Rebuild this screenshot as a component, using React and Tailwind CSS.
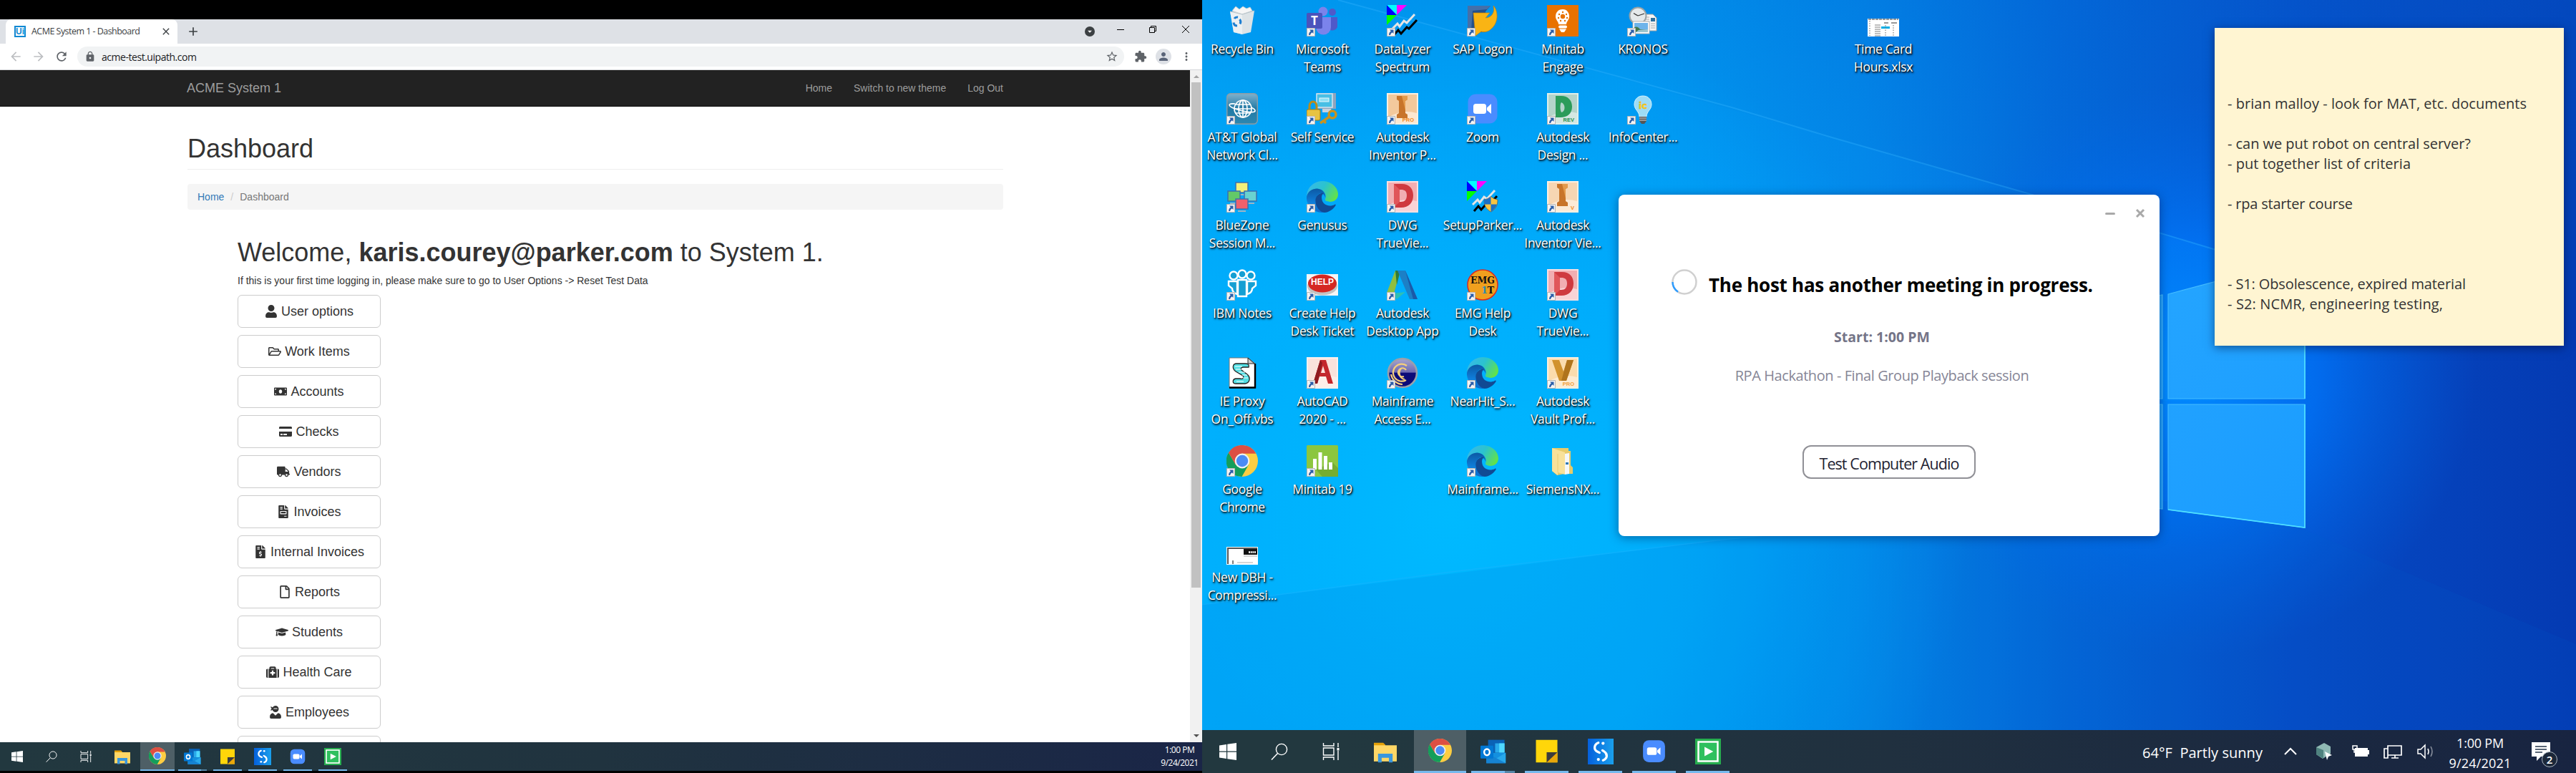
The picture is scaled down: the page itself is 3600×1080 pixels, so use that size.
import { useLayoutEffect, useRef, useState } from "react";
import {
  FaUser, FaRegFolderOpen, FaMoneyBill, FaCreditCard, FaTruck, FaFileInvoice,
  FaFileInvoiceDollar, FaRegFile, FaGraduationCap, FaMedkit, FaUserNinja,
} from "react-icons/fa";
import {
  MdArrowBack, MdArrowForward, MdRefresh, MdLock, MdStarBorder, MdExtension,
  MdPerson, MdMoreVert, MdClose, MdAdd, MdArrowDropDown,
} from "react-icons/md";

/* Text tracked so that it spans a given width. */
function Fit({ w, className = "", children }) {
  const ref = useRef(null);
  const [ls, setLs] = useState(0);
  useLayoutEffect(() => {
    const n = ref.current.getBoundingClientRect().width;
    setLs((w - n) / (String(children).length - 1));
  }, [w, children]);
  return (
    <span ref={ref} className={"inline-block whitespace-pre " + className} style={{ letterSpacing: ls + "px" }}>
      {children}
    </span>
  );
}

/* ---------- Application icons ---------- */

const Svg = ({ children, vb = "0 0 44 44", className = "h-full w-full" }) => (
  <svg viewBox={vb} className={className}>{children}</svg>
);

const ChromeIcon = () => (
  <Svg vb="2 2 44 44">
    <circle cx="24" cy="24" r="22" fill="#fdcd42" />
    <path d="M5 12.5A22 22 0 0 0 23.5 46L33 29.2 24 24 14.9 29.2Z" fill="#149e5b" />
    <path d="M5 12.5A22 22 0 0 1 43.3 13.8H24V24L14.9 29.2Z" fill="#dd4f43" />
    <circle cx="24" cy="24" r="10.4" fill="#f1f1f1" />
    <circle cx="24" cy="24" r="8.2" fill="#4b8bf5" />
  </Svg>
);

const EdgeIcon = () => (
  <Svg vb="0 0 48 48">
    <defs>
      <linearGradient id="edgeTop" x1="0" y1="0.2" x2="1" y2="0.6">
        <stop offset="0" stopColor="#38b8ea" /><stop offset="0.5" stopColor="#2bc3cf" /><stop offset="1" stopColor="#62e24a" />
      </linearGradient>
      <linearGradient id="edgeMid" x1="0" y1="0" x2="0" y2="1">
        <stop offset="0" stopColor="#0c59a4" /><stop offset="0.6" stopColor="#0f7fdc" /><stop offset="1" stopColor="#0c6acb" />
      </linearGradient>
    </defs>
    <path d="M0 24C0 9 12 0 24 0C38 0 48 10 48 20C48 28 42 31.500 36 31.500C30 31.500 27 29 28.500 27C31 22 27 12 16 11.500C8 12 2 17 0 24Z" fill="url(#edgeTop)" />
    <path d="M0 24C2 15 9 11.500 16 11.500C25 12 30 20 28.500 25C27 19 21 17 17 21C12 26 14 40 27 48C12 49 -1 38 0 24Z" fill="url(#edgeMid)" />
    <path d="M25 18C19 18.500 13.500 22.500 13.500 30C13.500 39 20 47 27 48C35 47.500 41.500 42 44.500 36.500C44.500 35.500 43.500 35 42.500 36C36 39.500 24 38 23 26C22.700 22 24 20 26 18.500Z" fill="#114a94" />
  </Svg>
);

const ZoomIcon = () => (
  <Svg>
    <rect x="1.500" y="1.500" width="41" height="41" rx="11" fill="#4a8cff" />
    <rect x="9" y="15" width="18" height="14" rx="3.500" fill="#fff" />
    <path d="M28 20.500L34 15V29L28 24Z" fill="#fff" />
  </Svg>
);

const OutlookIcon = () => (
  <Svg>
    <rect x="13" y="2" width="28" height="22" fill="#0a62b6" />
    <rect x="25" y="8" width="16" height="16" fill="#28a8ea" />
    <rect x="32" y="8" width="9" height="16" fill="#50d9ff" />
    <path d="M10 24H43V42H10Z" fill="#1490df" />
    <path d="M43 24L27 34 43 42Z" fill="#28a8ea" />
    <path d="M10 24L43 42H10Z" fill="#1683d2" />
    <rect x="0" y="12" width="22" height="22" rx="1.500" fill="#0078d4" />
    <ellipse cx="11" cy="23" rx="4.700" ry="5.300" fill="none" stroke="#fff" strokeWidth="3" />
  </Svg>
);

const StickyIcon = () => (
  <Svg vb="2 0 40 44">
    <path d="M2 1H42V43H2Z" fill="#ffd60a" />
    <path d="M22 43V24H42V43Z" fill="#e9a70a" />
    <path d="M22 43V24H42Z" fill="#3c3c3c" />
  </Svg>
);

const SIcon = () => (
  <Svg>
    <defs><linearGradient id="sg"><stop offset="0" stopColor="#0560dc" /><stop offset="1" stopColor="#1aa0ec" /></linearGradient></defs>
    <rect width="44" height="44" fill="url(#sg)" />
    <g fill="none" stroke="#fff" strokeWidth="4" strokeLinecap="round">
      <path d="M18 7C10 10 10 19 16 22L20 24" />
      <path d="M25 20L28 22C34 26 34 34 26 37" />
    </g>
    <circle cx="26" cy="8" r="2.600" fill="#fff" />
    <circle cx="18" cy="35.500" r="2.600" fill="#fff" />
  </Svg>
);

const GreenPlay = () => (
  <Svg>
    <rect width="44" height="44" fill="#27ae4f" />
    <rect x="5.500" y="5.500" width="33" height="33" fill="#2fc05e" stroke="#fff" strokeWidth="3" />
    <path d="M16 14L31 22 16 30Z" fill="#fff" />
  </Svg>
);

const ExplorerIcon = () => (
  <Svg vb="0 2 44 42">
    <path d="M0 6H18L22 10V16H0Z" fill="#e3a008" />
    <path d="M0 11H44V42H0Z" fill="#ffd766" />
    <path d="M8 27H36V44H29V35H15V44H8Z" fill="#3a97dd" />
  </Svg>
);

const WinIcon = () => (
  <Svg vb="0 0 24 24">
    <path d="M0 3.400L10 2V11.500H0ZM11.200 1.800L24 0V11.500H11.200ZM0 12.700H10V22L0 20.600ZM11.200 12.700H24V24L11.200 22.200Z" fill="#fff" />
  </Svg>
);

const SearchIcon = () => (
  <Svg vb="0 0 24 24">
    <circle cx="15" cy="9" r="7.600" fill="none" stroke="#fff" strokeWidth="1.400" />
    <path d="M9.600 14.500L1 23.500" stroke="#fff" strokeWidth="1.500" />
  </Svg>
);

const TaskViewIcon = () => (
  <Svg vb="0 0 24 24">
    <g fill="none" stroke="#fff" strokeWidth="1.400">
      <path d="M1.500 0V4H16V0M1.500 24V20H16V24M1.500 7H16V17H1.500ZM22 0V6M22 11V24" />
    </g>
    <rect x="20.500" y="7" width="3" height="3.500" fill="#fff" />
  </Svg>
);

const RecycleIcon = () => (
  <Svg>
    <path d="M5 9L39 8 34 38 22 41 10 38Z" fill="#dde3e6" />
    <path d="M5 9L22 12V41L10 38Z" fill="#f2f5f6" opacity="0.7" />
    <path d="M8 8L13 2 18 6 23 2 28 5 33 3 36 8 22 13Z" fill="#f6f6f6" stroke="#c4cace" strokeWidth="0.8" />
    <path d="M5 9L22 13 39 8" fill="none" stroke="#b7c4ca" />
    <g fill="none" stroke="#1f7fd0" strokeWidth="3">
      <path d="M11 19Q12.500 16.500 16 17" /><path d="M18.500 20Q21 23 19 26.500" /><path d="M15 29Q10.500 29 10 24.500" />
    </g>
  </Svg>
);

const TeamsIcon = () => (
  <Svg>
    <circle cx="36" cy="10" r="5" fill="#5059c9" />
    <path d="M31 17H43V31A8 8 0 0 1 31 34Z" fill="#5059c9" />
    <circle cx="23" cy="9" r="6.500" fill="#7b83eb" />
    <path d="M13 17H34V31A10.500 10.500 0 0 1 13 31Z" fill="#7b83eb" />
    <rect x="0" y="11" width="22" height="22" rx="2" fill="#4b53bc" />
    <text x="11" y="28" textAnchor="middle" fontSize="17" fontWeight="700" fill="#fff" fontFamily="Open Sans, sans-serif">T</text>
  </Svg>
);

const Shield = () => (
  <g>
    <path d="M24 26Q30 25 33.500 21.500 37 25 43 26C43 35 40 39 33.500 43 27 39 24 35 24 26Z" fill="#f9c440" stroke="#555" strokeWidth="0.700" />
    <path d="M33.500 22V32.500H24.500Q24 29 24 26 30 25 33.500 22ZM33.500 32.500H42Q40 39 33.500 43Z" fill="#1c6fc4" />
  </g>
);

const DataIcon = ({ shield }) => (
  <Svg>
    <path d="M0 0H14V14Z" fill="#00ffff" /><path d="M0 0V14H14Z" fill="#0000ff" />
    <path d="M14 0H28L14 14Z" fill="#ff00ff" /><path d="M0 14H14L0 28Z" fill="#00ff00" />
    <path d="M8 33L15 26 18 30 24 22 28 25 39 13" fill="none" stroke="#e5e5e5" strokeWidth="3" />
    <path d="M10 42L16 35 20 40 28 31 31 33 42 21" fill="none" stroke="#000" strokeWidth="3" />
    {shield && <Shield />}
  </Svg>
);

const SapIcon = () => (
  <Svg>
    <path d="M1 1H33L26 9V38H1Z" fill="#23508c" />
    <path d="M1 1H33L28 6 8 8 6 36 1 38Z" fill="#5a86bd" opacity="0.6" />
    <path d="M9 11H32L26 18C34 18 40 10 37 1 44 8 45 26 32 35 28 38 22 38 20 37L12 43Z" fill="#f9b414" stroke="#c98408" strokeWidth="0.700" />
  </Svg>
);

const MinitabEngage = () => (
  <Svg>
    <rect width="44" height="44" fill="#e87200" />
    <path d="M22 6C15 6 12 11 12 16 12 21 16 23 16 27H27C27 23 31 21 31 16 31 11 28 6 22 6Z" fill="#fff" />
    <rect x="16" y="28.500" width="12" height="4" rx="2" fill="#fff" /><path d="M17 33.500H27L24 38H20Z" fill="#fff" />
    <circle cx="22" cy="16" r="3.200" fill="#e87200" />
    <g fill="#e87200"><circle cx="22" cy="10" r="1.200" /><circle cx="17" cy="13" r="1.200" /><circle cx="27" cy="13" r="1.200" /><circle cx="16" cy="18" r="1.200" /><circle cx="28" cy="18" r="1.200" /><circle cx="19" cy="22" r="1.200" /><circle cx="25" cy="22" r="1.200" /></g>
  </Svg>
);

const KronosIcon = () => (
  <Svg>
    <path d="M22 13H36L41 18V36H22Z" fill="#f5f5f5" stroke="#a5a5a5" />
    <rect x="33" y="18" width="6" height="5" fill="#2d6f9e" />
    <path d="M25 17H31M25 20H31M25 23H31M33 26H39M33 29H39M33 32H39" stroke="#aaa" />
    <circle cx="15" cy="15" r="11.500" fill="#e5e9ea" stroke="#9aa3a5" strokeWidth="2" />
    <path d="M15 15L9 11.500M15 15L24 12" stroke="#333" strokeWidth="1.300" />
    <rect x="8" y="23" width="23" height="17" fill="#fff" stroke="#b4b4b4" />
    <rect x="10" y="25" width="19" height="13" fill="#6eb4ea" />
    <path d="M10 31Q15 29 18 34L29 35V38H10Z" fill="#44784c" /><path d="M16 35L29 34V38H12Z" fill="#9cc5d0" />
  </Svg>
);

const AttIcon = () => (
  <Svg>
    <defs><linearGradient id="att" x1="0" y1="0" x2="0" y2="1"><stop offset="0" stopColor="#7fb1cd" /><stop offset="0.500" stopColor="#227aa5" /><stop offset="1" stopColor="#2d87b0" /></linearGradient></defs>
    <rect x="0.700" y="0.700" width="42.600" height="42.600" rx="5" fill="url(#att)" stroke="#8d9da6" strokeWidth="1.400" />
    <g fill="none" stroke="#fff" strokeWidth="1.700">
      <circle cx="23" cy="22" r="12" /><ellipse cx="23" cy="22" rx="6" ry="12" /><path d="M23 10V34M12.500 16H33.500M12.500 28H33.500M11 22H35" />
      <path d="M12 15C2 14 1 18 12 22 26 27 40 28 40 25 40 23 37 21 34 20" />
    </g>
  </Svg>
);

const SelfIcon = () => (
  <Svg>
    <path d="M14 0H41V22H14Z" fill="#8fa4bd" /><rect x="14" y="1" width="22" height="19" fill="#48bfe5" stroke="#d3e3ee" strokeWidth="1.500" />
    <rect x="18" y="7" width="13" height="5" fill="#8fe0f5" stroke="#eaf7fb" /><path d="M22 22H34L36 27H22Z" fill="#c9d2dc" />
    <path d="M4 25V18A5 6 0 0 1 14 18V25" fill="none" stroke="#b98d1b" strokeWidth="3" />
    <rect x="0" y="23" width="19" height="15" rx="2" fill="#e7c341" stroke="#a67d12" />
    <circle cx="36" cy="30" r="5" fill="none" stroke="#c9931f" strokeWidth="3.500" /><path d="M32 33L19 42M24 39L27 42" stroke="#c9931f" strokeWidth="3.500" />
  </Svg>
);

const Tile = ({ bg, bg2, tag, tagColor, shape }) => (
  <Svg>
    <rect width="44" height="44" fill={bg} />
    <rect x="2" y="2" width="40" height="40" fill={bg2} />
    <path d="M2 34Q22 22 42 28V42H2Z" fill={bg} opacity="0.75" />
    {shape}
    {tag && <text x="38" y="40" textAnchor="end" fontSize="7.500" fontWeight="700" fill={tagColor} fontFamily="Liberation Sans, sans-serif">{tag}</text>}
  </Svg>
);

const iShape = (
  <g><path d="M14 4H29V9L26 11V28L29 30V35H14V30L17 28V11L14 9Z" fill="#c8742a" /><path d="M21 4H29V9L26 11V24Z" fill="#e39a4c" /></g>
);
const dShape = (
  <g>
    <path fillRule="evenodd" d="M10 4H21C32 4 37 11 37 20 37 30 31 37 20 37H10ZM18 12V29H20C25 29 28 26 28 20 28 14 25 12 20 12Z" fill="#cf3a40" />
    <path d="M10 4L18 12V29L10 37Z" fill="#e0565a" />
  </g>
);
const InventorPro = () => <Tile bg="#fdf0e2" bg2="#f3c99c" shape={iShape} tag="PRO" tagColor="#ee8822" />;
const InventorView = () => <Tile bg="#fdf0e2" bg2="#f6d6b3" shape={iShape} tag="V" tagColor="#ee8822" />;
const Dwg = () => <Tile bg="#fbdfe1" bg2="#f1aeb2" shape={dShape} />;
const DesignRev = () => (
  <Tile bg="#dfeee9" bg2="#b4d4ca" tag="REV" tagColor="#1f8f4c" shape={<path fillRule="evenodd" d="M12 4H20C29 4 35 10 35 19 35 29 28 34 19 34H12ZM20 13C18 15 18 24 20 27 26 26 26 15 20 13Z" fill="#2c9c5a" />} />
);
const AutoCad = () => (
  <Tile bg="#fdf1ee" bg2="#fae2dc" shape={<g><path fillRule="evenodd" d="M9 37L19 4H27L37 37H30L27 27H18L15 37ZM20 22H26L23 12Z" fill="#c4262c" /><path d="M9 37L19 4 22 8 15 37Z" fill="#8f1a20" /></g>} />
);
const Vault = () => (
  <Tile bg="#fdf0de" bg2="#fbdcae" tag="PRO" tagColor="#f0a040" shape={<g><path d="M7 4H17L23 20 28 4H37L27 33H17Z" fill="#d1922e" /><path d="M28 4H37L27 33H20Z" fill="#b0741c" /></g>} />
);

const Monitor = ({ x, y, c }) => (
  <g><rect x={x} y={y} width="17" height="14" fill={c} stroke="#3c6fae" strokeWidth="1.500" /><path d={`M${x + 3} ${y + 17}H${x + 14}`} stroke="#9fb3c4" strokeWidth="2" /></g>
);
const BlueZone = () => (
  <Svg><Monitor x={13} y={2} c="#f4f07a" /><Monitor x={2} y={14} c="#63c968" /><Monitor x={25} y={14} c="#69d2d0" /><Monitor x={13} y={25} c="#f0606c" /></Svg>
);

const IbmNotes = () => (
  <Svg>
    <g fill="#159fd3" stroke="#fff" strokeWidth="2.400">
      <circle cx="10" cy="9" r="5.500" /><circle cx="34" cy="9" r="5.500" />
      <path d="M3 17H15V35Q8 33 8 27L3 23ZM41 17H29V35Q36 33 36 27L41 23Z" />
      <circle cx="22" cy="7" r="5.500" /><path d="M16 15H28V38H16Z" />
    </g>
  </Svg>
);

const HelpIcon = () => (
  <Svg>
    <rect y="7" width="44" height="30" fill="#f5f5f5" />
    <ellipse cx="22" cy="24" rx="21" ry="12.500" fill="#c3c3c3" /><ellipse cx="22" cy="20" rx="20" ry="12.500" fill="#d52823" />
    <text x="22" y="22" textAnchor="middle" fontSize="12" fontWeight="700" fill="#fff" fontFamily="Liberation Sans, sans-serif">HELP</text>
  </Svg>
);

const DesktopApp = () => (
  <Svg>
    <path d="M0 33L12 2H19L10 34 0 42Z" fill="#8fbf3f" /><path d="M12 2L19 2 14 22Z" fill="#2e7b3c" />
    <path d="M15 2H26L43 42H32Z" fill="#1c80c6" /><path d="M26 2L43 42H37Z" fill="#1b59a8" /><path d="M8 34L26 32 14 42Z" fill="#2ebfb5" />
  </Svg>
);

const EmgIcon = () => (
  <Svg>
    <circle cx="22" cy="22" r="21" fill="#f0a01e" stroke="#dd2a1e" strokeWidth="1.500" />
    <text x="22" y="20" textAnchor="middle" fontSize="12.500" fontWeight="700" fill="#111" fontFamily="DejaVu Serif, serif">EMG</text>
    <text x="20" y="34" fontSize="13" fontWeight="700" fill="#2b8cb0" fontFamily="DejaVu Serif, serif">1</text>
    <text x="28.500" y="34" fontSize="13" fontWeight="700" fill="#111" fontFamily="DejaVu Serif, serif">T</text>
  </Svg>
);

const ScriptIcon = () => (
  <Svg>
    <path d="M4 1H30L40 9V43H4Z" fill="#fff" stroke="#777" />
    <path d="M4 42.500H40V9" fill="none" stroke="#000" strokeWidth="2.400" /><path d="M30 1V9H39Z" fill="#ccc" stroke="#222" />
    <path d="M31 14C32 10 30 9 26 9H13C8 10 8 16 13 20L23 26C25 29 23 31 19 30H13C8 31 8 37 13 37H26C33 36 34 28 29 24L21 18C19 16 21 14 24 14Z" fill="#52dfe4" stroke="#222" strokeWidth="1.300" />
    <path d="M12 13H22M13 17H21M17 21H26M22 25H29M23 29H30M14 34H24" stroke="#fff" strokeWidth="1.200" />
  </Svg>
);

const MainframeIcon = () => (
  <Svg>
    <defs><linearGradient id="mf" x1="0" y1="0" x2="0" y2="1"><stop offset="0" stopColor="#a9a6cf" /><stop offset="0.480" stopColor="#6d69b0" /><stop offset="0.500" stopColor="#0c0b78" /><stop offset="1" stopColor="#0c0b78" /></linearGradient></defs>
    <circle cx="22" cy="22" r="20" fill="url(#mf)" stroke="#9aa0aa" strokeWidth="2.600" />
    <g fill="none" stroke="#f5cf7c" strokeWidth="2.200">
      <path d="M27 18A6 6 0 1 0 24 27M28 12A12 12 0 1 0 27 32" /><path d="M6 24A17 17 0 0 0 22 38" /><path d="M20 16A9 9 0 0 0 25 31" />
    </g>
  </Svg>
);

const Minitab19 = () => (
  <Svg>
    <rect width="44" height="44" rx="1.500" fill="#8cc63f" />
    <path d="M13 34L36 24 44 32V44H22Z" fill="#76ad31" />
    <g fill="#fff"><rect x="9" y="19" width="5" height="15" /><rect x="16.500" y="10" width="5" height="24" /><rect x="24" y="15" width="5" height="19" /><rect x="31" y="24" width="5" height="10" /></g>
  </Svg>
);

const BulbIcon = () => (
  <Svg>
    <path d="M22 4C13 4 10 11 10 16 10 23 17 26 17 33H27C27 26 34 23 34 16 34 11 31 4 22 4Z" fill="#9edcf5" stroke="#d8f3fd" />
    <text x="22" y="22" textAnchor="middle" fontSize="13" fontWeight="700" fill="#f9d423" stroke="#e8a512" strokeWidth="0.400" fontFamily="DejaVu Sans, sans-serif">ic</text>
    <path d="M17 33H27V39L24 43H20L17 39Z" fill="#555" /><path d="M17 35H27M17 38H27" stroke="#ddd" />
  </Svg>
);

const FolderDocs = () => (
  <Svg>
    <path d="M7 4H30V8H33V28L36 31V40H24L14 42 7 36Z" fill="#e8cb6a" />
    <path d="M25 12L31 11V40L25 41Z" fill="#f5f7f8" /><path d="M26 24H30V27H26Z" fill="#2f78b5" />
    <path d="M7 4L25 10V41L15 38V42L7 36Z" fill="#f8e19a" /><path d="M15 12V38" stroke="#e9cc77" />
  </Svg>
);

const DbhThumb = () => (
  <Svg>
    <rect y="19" width="44" height="25" fill="#fff" />
    <path d="M1 20H43V22H3V43H1Z" fill="#555" /><rect x="24" y="22" width="19" height="8" fill="#111" />
    <path d="M31 26.500H41" stroke="#fff" strokeWidth="2.500" strokeDasharray="2 0.700" /><path d="M24 32H43M15 41H37" stroke="#999" strokeWidth="0.800" /><path d="M9 38V43" stroke="#000" />
  </Svg>
);

const XlsThumb = () => (
  <Svg>
    <rect y="19" width="44" height="25" fill="#fff" /><path d="M1 20H43" stroke="#333" strokeDasharray="4 1" />
    <rect x="19" y="30" width="12" height="3" fill="#00aee6" />
    <path d="M10 28H18M10 31H18M10 34H18M10 37H18M10 40H18M10 43H18" stroke="#aaa" strokeWidth="1.300" />
    <path d="M23 25H29M33 25H41" stroke="#777" strokeWidth="1.500" />
    <path d="M3 22V43M25 28V43M36 28V43" stroke="#888" strokeDasharray="1.500 1.800" strokeWidth="1.300" />
  </Svg>
);

/* ---------- Taskbar ---------- */

const apps = [
  { Icon: OutlookIcon, split: true },
  { Icon: StickyIcon, narrow: true },
  { Icon: SIcon },
  { Icon: ZoomIcon, narrow: true },
  { Icon: GreenPlay },
];

function SmallTaskbar() {
  return (
    <div className="flex h-10 shrink-0 bg-linear-to-r from-[#22383f] via-[#20333f] to-[#1a2547] text-white">
      {[WinIcon, SearchIcon, TaskViewIcon].map((Icon, i) => (
        <div key={i} className="flex w-12 items-center justify-center"><div className="h-4 w-4"><Icon /></div></div>
      ))}
      <div className="flex w-[52px] items-center justify-center pl-0.5"><div className="h-[22px] w-[22px]"><ExplorerIcon /></div></div>
      <div className="flex w-12 items-center justify-center border-b-2 border-[#76b9ed] bg-[#4e5f66]">
        <div className="h-6 w-6"><ChromeIcon /></div>
      </div>
      {apps.map(({ Icon, narrow, split }, i) => (
        <div key={i} className="flex w-[49px] flex-col items-center">
          <div className="flex flex-1 items-center pt-0.5"><div className={narrow ? "h-[22px] w-[22px]" : "h-6 w-6"}><Icon /></div></div>
          <div className="flex h-0.5 w-10 bg-[#76b9ed]">{split && <div className="ml-auto w-2 bg-[#5585a6]" />}</div>
        </div>
      ))}
      <div className="ml-auto flex w-[63px] flex-col justify-center text-center font-['Open_Sans',sans-serif] text-[12px] leading-[18px] tracking-[-0.5px]">
        <div>1:00 PM</div><div>9/24/2021</div>
      </div>
    </div>
  );
}

function LargeTaskbar() {
  return (
    <div className="relative flex h-[60px] shrink-0 bg-linear-to-r from-[#22383f] from-10% via-[#20303f] via-50% to-[#182441] text-white">
      {[WinIcon, SearchIcon, TaskViewIcon].map((Icon, i) => (
        <div key={i} className="flex w-[72px] items-center justify-center"><div className="h-6 w-6"><Icon /></div></div>
      ))}
      <div className="flex w-20 items-center justify-center"><div className="h-8 w-8"><ExplorerIcon /></div></div>
      <div className="flex w-[73px] items-center justify-center border-b-3 border-[#76b9ed] bg-[#4e5f66]">
        <div className="h-[33px] w-[33px]"><ChromeIcon /></div>
      </div>
      {apps.map(({ Icon, narrow, split }, i) => (
        <div key={i} className="flex w-[75px] flex-col items-center">
          <div className="flex flex-1 items-center pt-0.5"><div className={narrow ? "h-[33px] w-[33px]" : "h-9 w-9"}><Icon /></div></div>
          <div className="flex h-[3px] w-[61px] bg-[#76b9ed]">{split && <div className="ml-auto w-3.5 bg-[#5585a6]" />}</div>
        </div>
      ))}
      <div className="ml-auto flex items-center font-['Open_Sans',sans-serif]">
        <Fit w={168} className="mr-[25px] pt-1 text-[20px]">64°F  Partly sunny</Fit>
        <svg viewBox="0 0 28 28" className="mr-[19px] h-7 w-7 fill-none stroke-white stroke-2"><path d="M6 18L14 10 22 18" /></svg>
        <svg viewBox="0 0 28 28" className="mr-[23px] h-7 w-7">
          <path d="M3 8L14 2 23 7V17L12 24 3 18Z" fill="#8fb9b4" /><path d="M3 8L13 12V24L3 18Z" fill="#4f827f" />
          <path d="M15 14L25 19 20 21 18 26Z" fill="#fff" />
        </svg>
        <svg viewBox="0 0 28 28" className="mr-[17px] h-7 w-7">
          <path d="M6 9H24V21H6Z" fill="#fff" /><path d="M24 12H26V18H24Z" fill="#fff" /><path d="M3 6H9V11H3ZM5 11V15H9" fill="none" stroke="#fff" strokeWidth="1.500" />
        </svg>
        <svg viewBox="0 0 28 28" className="mr-[18px] h-7 w-7 fill-none stroke-white [stroke-width:1.700]"><path d="M7 6H26V19H7ZM12 23H22M17 19V23M2 10H7V23H2Z" /></svg>
        <svg viewBox="0 0 28 28" className="mr-[16px] h-7 w-7 fill-none stroke-white [stroke-width:1.500]"><path d="M3 11H7L13 5V23L7 17H3Z" /><path d="M17 10Q19 14 17 18" /><path d="M21 7Q25 14 21 21" opacity="0.5" /></svg>
        <div className="flex w-[92px] flex-col items-center pt-1 text-[18px] leading-[28px]">
          <Fit w={66}>1:00 PM</Fit><Fit w={87}>9/24/2021</Fit>
        </div>
        <div className="relative ml-[24px] mr-[28px] h-8 w-9">
          <svg viewBox="0 0 36 32" className="h-8 w-9"><path d="M2 3H28V23H15L9 29V23H2Z" fill="#fff" /><path d="M7 9H23M7 13H23M7 17H17" stroke="#24344a" strokeWidth="1.500" /></svg>
          <span className="absolute -right-0.5 -bottom-1.5 flex h-[22px] w-[22px] items-center justify-center rounded-full border border-[#aab4bf] bg-[#1b2739] text-[15px] font-semibold">2</span>
        </div>
      </div>
    </div>
  );
}

/* ---------- Browser ---------- */

const menu = [
  [FaUser, "User options"], [FaRegFolderOpen, "Work Items"], [FaMoneyBill, "Accounts"],
  [FaCreditCard, "Checks"], [FaTruck, "Vendors"], [FaFileInvoice, "Invoices"],
  [FaFileInvoiceDollar, "Internal Invoices"], [FaRegFile, "Reports"], [FaGraduationCap, "Students"],
  [FaMedkit, "Health Care"], [FaUserNinja, "Employees"], [null, ""],
];

function Browser() {
  return (
    <section className="flex h-full w-[1680px] shrink-0 flex-col overflow-hidden bg-black pt-[27px] pb-[3px]">
      <div className="flex h-[34px] shrink-0 bg-[#dee1e6] pl-2 font-['Open_Sans',sans-serif]">
        <div className="flex w-60 items-center rounded-t-lg bg-white pl-3 text-[#3c4043]">
          <div className="flex h-4 w-4 items-center justify-center border-2 border-[#1089d3] font-['Liberation_Sans',sans-serif] text-[12px] font-bold leading-none text-[#1089d3]">Ui</div>
          <Fit w={152} className="ml-2 text-[12.500px]">ACME System 1 - Dashboard</Fit>
          <MdClose className="mr-2 ml-auto h-4 w-4" />
        </div>
        <MdAdd className="mt-[7px] ml-3 h-5 w-5 text-[#3c4043]" />
        <div className="ml-auto flex h-7 items-center">
          <div className="mr-[31px] flex h-3.5 w-3.5 translate-y-[3px] items-center justify-center rounded-full bg-[#3c4043] text-white"><MdArrowDropDown className="h-4 w-4" /></div>
          <div className="mr-[35px] h-px w-2.5 bg-black" />
          <svg viewBox="0 0 10 10" className="mr-[36px] h-2.5 w-2.5 fill-none stroke-black"><path d="M.5 2.500H7.500V9.500H.5ZM2.500 2.500V.5H9.500V7.500H7.500" /></svg>
          <svg viewBox="0 0 10 10" className="mr-[18px] h-2.5 w-2.5 stroke-black"><path d="M0 0L10 10M10 0L0 10" /></svg>
        </div>
      </div>
      <div className="flex h-[37px] shrink-0 items-center border-b border-[#d5d7da] bg-white text-[#5f6368]">
        <MdArrowBack className="ml-3 h-5 w-5 text-[#bdbfc2]" />
        <MdArrowForward className="ml-3 h-5 w-5 text-[#bdbfc2]" />
        <MdRefresh className="ml-3 h-5 w-5" />
        <div className="ml-3 flex h-7 w-[1463px] items-center rounded-full bg-[#f1f3f4] pl-2.5">
          <MdLock className="h-4 w-4" />
          <Fit w={133} className="ml-2 font-['Open_Sans',sans-serif] text-[14px] text-[#202124]">acme-test.uipath.com</Fit>
          <MdStarBorder className="mr-2 ml-auto h-[18px] w-[18px]" />
        </div>
        <MdExtension className="ml-3.5 h-[18px] w-[18px]" />
        <div className="ml-3 flex h-[22px] w-[22px] items-center justify-center rounded-full bg-[#dee1e6]"><MdPerson className="h-[18px] w-[18px] text-[#5a6478]" /></div>
        <MdMoreVert className="ml-3 h-[18px] w-[18px]" />
      </div>
      <div className="flex min-h-0 flex-1 bg-white font-['Liberation_Sans',sans-serif] text-[14px] leading-5 text-[#333]">
        <main className="w-[1663px] overflow-hidden">
          <nav className="flex h-[51px] items-center border-b border-[#080808] bg-[#222] pr-[261px] pl-[261px] text-[#9d9d9d]">
            <div className="text-lg">ACME System 1</div>
            <div className="ml-auto flex gap-[30px]"><span>Home</span><span>Switch to new theme</span><span>Log Out</span></div>
          </nav>
          <div className="ml-[262px] w-[1140px]">
            <h1 className="border-b border-[#eee] pt-[39px] pb-2 text-[36px] leading-[40px]">Dashboard</h1>
            <div className="mt-5 flex h-9 items-center rounded bg-[#f5f5f5] px-3.5">
              <span className="text-[#337ab7]">Home</span><span className="mx-[9px] text-[#ccc]">/</span><span className="text-[#777]">Dashboard</span>
            </div>
            <div className="pt-[40px] pl-[70px]">
              <h2 className="text-[36px] leading-[40px]">Welcome, <b>karis.courey@parker.com</b> to System 1.</h2>
              <p className="mt-[9px] mb-[10px]">If this is your first time logging in, please make sure to go to User Options -&gt; Reset Test Data</p>
              <div className="flex flex-col gap-2.5">
                {menu.map(([Icon, label], i) => (
                  <div key={i} className="flex h-[46px] w-[200px] items-center justify-center gap-[5px] rounded-md border border-[#ccc] text-lg">
                    {Icon && <Icon className="h-[18px] w-auto" />}<span>{label}</span>
                  </div>
                ))}
              </div>
            </div>
          </div>
        </main>
        <div className="flex w-[17px] flex-col items-center bg-[#f1f1f1]">
          <div className="mt-[7px] h-0 w-0 border-x-4 border-b-4 border-x-transparent border-b-[#a3a3a3]" />
          <div className="mt-1.5 h-[706px] w-[13px] bg-[#c1c1c1]" />
          <div className="mt-auto mb-[7px] h-0 w-0 border-x-4 border-t-4 border-x-transparent border-t-[#505050]" />
        </div>
      </div>
      <SmallTaskbar />
    </section>
  );
}

/* ---------- Desktop ---------- */

const items = [
  [0, 0, RecycleIcon, ["Recycle Bin"], false], [1, 0, TeamsIcon, ["Microsoft", "Teams"]], [2, 0, DataIcon, ["DataLyzer", "Spectrum"]],
  [3, 0, SapIcon, ["SAP Logon"]], [4, 0, MinitabEngage, ["Minitab", "Engage"]], [5, 0, KronosIcon, ["KRONOS"]],
  [8, 0, XlsThumb, ["Time Card", "Hours.xlsx"], false],
  [0, 1, AttIcon, ["AT&T Global", "Network Cl..."]], [1, 1, SelfIcon, ["Self Service"]], [2, 1, InventorPro, ["Autodesk", "Inventor P..."]],
  [3, 1, ZoomIcon, ["Zoom"]], [4, 1, DesignRev, ["Autodesk", "Design ..."]], [5, 1, BulbIcon, ["InfoCenter..."]],
  [0, 2, BlueZone, ["BlueZone", "Session M..."]], [1, 2, EdgeIcon, ["Genusus"]], [2, 2, Dwg, ["DWG", "TrueVie..."]],
  [3, 2, () => <DataIcon shield />, ["SetupParker..."], false], [4, 2, InventorView, ["Autodesk", "Inventor Vie..."]],
  [0, 3, IbmNotes, ["IBM Notes"]], [1, 3, HelpIcon, ["Create Help", "Desk Ticket"]], [2, 3, DesktopApp, ["Autodesk", "Desktop App"]],
  [3, 3, EmgIcon, ["EMG Help", "Desk"]], [4, 3, Dwg, ["DWG", "TrueVie..."]],
  [0, 4, ScriptIcon, ["IE Proxy", "On_Off.vbs"], false], [1, 4, AutoCad, ["AutoCAD", "2020 - ..."]], [2, 4, MainframeIcon, ["Mainframe", "Access E..."]],
  [3, 4, EdgeIcon, ["NearHit_S..."]], [4, 4, Vault, ["Autodesk", "Vault Prof..."]],
  [0, 5, ChromeIcon, ["Google", "Chrome"]], [1, 5, Minitab19, ["Minitab 19"]], [3, 5, EdgeIcon, ["Mainframe..."]],
  [4, 5, FolderDocs, ["SiemensNX..."], false],
  [0, 6, DbhThumb, ["New DBH -", "Compressi..."], false],
];

function DesktopItem({ col, row, Icon, lines, shortcut }) {
  return (
    <div className="flex flex-col items-center pt-[7px]" style={{ gridColumn: col + 1, gridRow: row + 1 }}>
      <div className="relative h-11 w-11 shrink-0">
        <Icon />
        {shortcut && (
          <svg viewBox="0 0 12 12" className="absolute bottom-0 left-0 h-3 w-3">
            <path d="M.5.5H11.500V11.500H.5Z" fill="#f4f4f4" stroke="#b5b5b5" />
            <path d="M4 2.500H9.500V8L7.800 6.300Q5.500 7.500 5 10H3Q3 6.500 5.800 4.300Z" fill="#2c5ea8" />
          </svg>
        )}
      </div>
      <div className="mt-[5px] text-center text-[17.500px] leading-[25px] tracking-[-0.300px] whitespace-nowrap text-white [text-shadow:1px_1px_2px_rgba(0,0,0,1),1px_2px_3px_rgba(0,0,0,0.8)]">
        {lines.map((l) => <div key={l}>{l}</div>)}
      </div>
    </div>
  );
}

const Wallpaper = () => (
  <svg viewBox="0 0 1920 1020" className="absolute inset-0 h-[1020px] w-[1920px]">
    <defs>
      <linearGradient id="base" x1="0" y1="0" x2="1" y2="0">
        <stop offset="0" stopColor="#00aaf8" /><stop offset="0.300" stopColor="#00a2f4" /><stop offset="0.480" stopColor="#0388e8" />
        <stop offset="0.620" stopColor="#0468d8" /><stop offset="0.800" stopColor="#064ac4" /><stop offset="1" stopColor="#043ab2" />
      </linearGradient>
      <linearGradient id="topShade" x1="0" y1="0" x2="0" y2="1">
        <stop offset="0" stopColor="#0068d8" stopOpacity="0.300" /><stop offset="0.450" stopColor="#0080e8" stopOpacity="0" />
      </linearGradient>
      <radialGradient id="cyan" cx="350" cy="720" r="720" gradientUnits="userSpaceOnUse">
        <stop offset="0" stopColor="#00baff" /><stop offset="0.500" stopColor="#00b2ff" stopOpacity="0.700" /><stop offset="1" stopColor="#00a8ff" stopOpacity="0" />
      </radialGradient>
      <radialGradient id="glow" cx="1380" cy="520" r="400" gradientUnits="userSpaceOnUse">
        <stop offset="0" stopColor="#008cff" /><stop offset="0.450" stopColor="#007aff" stopOpacity="0.700" /><stop offset="1" stopColor="#0068e8" stopOpacity="0" />
      </radialGradient>
      <linearGradient id="pane" x1="0" y1="0" x2="1" y2="1"><stop offset="0" stopColor="#28a8ff" /><stop offset="1" stopColor="#1a9cff" /></linearGradient>
      <linearGradient id="beam" x1="0" y1="0" x2="1" y2="0"><stop offset="0" stopColor="#00b4ff" stopOpacity="0.150" /><stop offset="1" stopColor="#0090ff" stopOpacity="0.550" /></linearGradient>
    </defs>
    <rect width="1920" height="1020" fill="url(#base)" />
    <rect width="1920" height="1020" fill="url(#topShade)" />
    <rect width="1920" height="1020" fill="url(#cyan)" />
    <rect width="1920" height="1020" fill="url(#glow)" />
    <path d="M190 0L880 192 1416 348V560L0 560V0Z" fill="url(#beam)" opacity="0.350" />
    <path d="M0 845L720 755 1344 700 1541 740 1920 900V1020H0Z" fill="#0062d0" opacity="0.120" />
    <g fill="none" stroke="#35b4ff">
      <path d="M190 0L740 150 880 192 1160 272 1420 350" strokeWidth="2" opacity="0.350" />
      <path d="M0 845L340 800 720 755 1340 690" strokeWidth="1.500" opacity="0.250" />
    </g>
    <g fill="url(#pane)" stroke="#45bdff" strokeWidth="1.200">
      <path d="M1160 440L1342 412V557H1160ZM1160 565H1342V711L1160 690ZM1350 411L1541 360V557H1350ZM1350 565H1541V737L1350 712Z" />
    </g>
    <path d="M1541 360V557M1541 565V737L1350 712" fill="none" stroke="#4fe0ff" strokeWidth="1.600" />
  </svg>
);

const note = [
  "- brian malloy - look for MAT, etc. documents", "", "- can we put robot on central server?", "- put together list of criteria", "",
  "- rpa starter course", "", "", "", "- S1: Obsolescence, expired material", "- S2: NCMR, engineering testing,",
];
const noteWidths = [418, 0, 340, 256, 0, 175, 0, 0, 0, 333, 301];

function Desktop() {
  return (
    <section className="relative flex h-full w-[1920px] flex-col overflow-hidden bg-[#0472dd] font-['Open_Sans',sans-serif]">
      <Wallpaper />
      <div className="relative min-h-0 flex-1">
        <div className="grid grid-cols-[repeat(9,112px)] grid-rows-[repeat(7,123px)]">
          {items.map(([c, r, Icon, lines, s = true]) => (
            <DesktopItem key={c + "-" + r} col={c} row={r} Icon={Icon} lines={lines} shortcut={s} />
          ))}
        </div>

        <div className="absolute top-[272px] left-[582px] flex h-[477px] w-[756px] flex-col items-center rounded-lg bg-white shadow-[0_2px_14px_rgba(0,30,80,0.5)]">
          <div className="flex h-[52px] w-full items-center justify-end pr-[20px] text-[#a6a6a6]">
            <div className="mr-[28px] h-[3px] w-3.5 rounded bg-[#a9a9a9]" />
            <svg viewBox="0 0 14 14" className="h-3.5 w-3.5 stroke-[#a9a9a9] [stroke-width:3]"><path d="M2 2L12 12M12 2L2 12" /></svg>
          </div>
          <div className="mt-[50px] flex w-full items-start pl-[74px]">
            <svg viewBox="0 0 36 36" className="mt-0.5 h-9 w-9 fill-none [stroke-width:2.500]">
              <circle cx="18" cy="18" r="16.500" stroke="#d0d0d0" /><path d="M1.500 18A16.500 16.500 0 0 0 9 31.700" stroke="#2d9cff" />
            </svg>
            <Fit w={537} className="ml-4 text-[26px] leading-[48px] font-bold text-black">The host has another meeting in progress.</Fit>
          </div>
          <Fit w={134} className="mt-[34px] mr-[20px] text-[19.500px] leading-[30px] font-bold text-[#747487]">Start: 1:00 PM</Fit>
          <Fit w={411} className="mt-[24px] mr-[20px] text-[20px] leading-[30px] text-[#868696]">RPA Hackathon - Final Group Playback session</Fit>
          <div className="mt-[82px] flex h-[47px] w-[242px] items-center justify-center rounded-xl border-2 border-[#909096] pt-1.5 text-[#232333]">
            <Fit w={196} className="text-[21.500px]">Test Computer Audio</Fit>
          </div>
        </div>

        <div className="absolute top-[39px] left-[1415px] h-[444px] w-[488px] bg-[#fff5d2] pt-[92px] pl-[18px] text-[20px] leading-[28px] text-[#333] shadow-[0_3px_12px_rgba(0,10,50,0.5)]">
          {note.map((t, i) => <div key={i} className="h-7">{t && <Fit w={noteWidths[i]}>{t}</Fit>}</div>)}
        </div>
      </div>
      <LargeTaskbar />
    </section>
  );
}

export default function App() {
  return (
    <div className="flex h-[1080px] w-[3600px] overflow-hidden">
      <Browser />
      <Desktop />
    </div>
  );
}
